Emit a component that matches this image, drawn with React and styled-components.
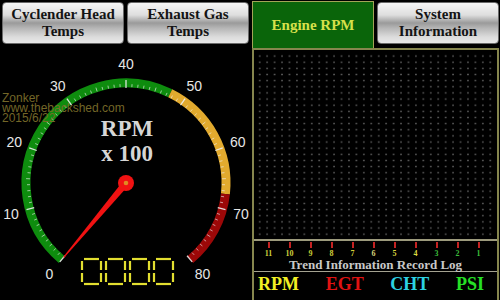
import React from 'react';
import styled, { createGlobalStyle, css } from 'styled-components';

const GlobalStyle = createGlobalStyle`
  html, body { margin: 0; padding: 0; background: #000; }
  body { width: 500px; height: 300px; overflow: hidden; }
`;

// gauge geometry (page coordinates)
const CX = 126;
const CY = 183;
const DEG = 3.5; // degrees per 1 unit (x100 rpm)

const pt = (v, r) => {
  const a = ((v - 40) * DEG * Math.PI) / 180;
  return [CX + r * Math.sin(a), CY - r * Math.cos(a)];
};

const arc = (v1, v2, r) => {
  const [x1, y1] = pt(v1, r);
  const [x2, y2] = pt(v2, r);
  const large = (v2 - v1) * DEG > 180 ? 1 : 0;
  return `M ${x1} ${y1} A ${r} ${r} 0 ${large} 1 ${x2} ${y2}`;
};

const tabs = [
  { label: ['Cyclender Head', 'Temps'] },
  { label: ['Exhaust Gas', 'Temps'] },
  { label: ['Engine RPM'], active: true },
  { label: ['System', 'Information'] },
];

const trend = [
  { n: 11, c: '#cfcf3a' }, { n: 10, c: '#cfcf3a' }, { n: 9, c: '#c4cc34' },
  { n: 8, c: '#d4d03a' }, { n: 7, c: '#d4d03a' }, { n: 6, c: '#d6d27a' },
  { n: 5, c: '#dcdc40' }, { n: 4, c: '#dcdc40' }, { n: 3, c: '#3cbc3c' },
  { n: 2, c: '#3cbc3c' }, { n: 1, c: '#3cc03c' },
];

const legend = [
  { t: 'RPM', c: '#f2f024' },
  { t: 'EGT', c: '#e01212' },
  { t: 'CHT', c: '#2cd2e2' },
  { t: 'PSI', c: '#26e026' },
];

const Screen = styled.div`
  width: 500px;
  height: 300px;
  background: #000;
  display: flex;
  flex-direction: column;
  overflow: hidden;
`;

const TabBar = styled.div`
  display: flex;
  gap: 3px;
  height: 48px;
  padding: 0 1px 0 2px;
  box-sizing: border-box;
  align-items: flex-start;
`;

const Tab = styled.div`
  flex: 1;
  box-sizing: border-box;
  display: flex;
  flex-direction: column;
  align-items: center;
  justify-content: center;
  text-align: center;
  font-family: "Liberation Serif", "Times New Roman", serif;
  font-weight: bold;
  font-size: 15px;
  line-height: 17px;
  ${(p) =>
    p.$active
      ? css`
          margin-top: 1px;
          height: 47px;
          background: #0a650a;
          border: 1px solid #a2a456;
          border-bottom: none;
          color: #d6e04a;
        `
      : css`
          margin-top: 2px;
          height: 42px;
          border-radius: 4px;
          border: 1px solid #6a6a6a;
          color: #141414;
          background: linear-gradient(
            to bottom,
            #f6f6f6 0%,
            #dedede 30%,
            #9a9a9a 50%,
            #b4b4b4 62%,
            #dcdcdc 85%,
            #e8e8e8 100%
          );
        `}
`;

const Body = styled.div`
  display: flex;
  height: 252px;
`;

const GaugeCol = styled.div`
  position: relative;
  width: 252px;
  height: 252px;
`;

const Watermark = styled.div`
  position: absolute;
  left: 2px;
  top: 45px;
  font-family: "Liberation Sans", Arial, sans-serif;
  font-size: 12px;
  line-height: 10px;
  color: #7a6c2a;
  opacity: 0.95;
  pointer-events: none;
`;

const Panel = styled.div`
  width: 247px;
  height: 252px;
  box-sizing: border-box;
  border: 2px solid #86864e;
  border-bottom: none;
  display: flex;
  flex-direction: column;
`;

const Plot = styled.div`
  height: 189px;
  box-sizing: border-box;
  padding: 3px 2px 2px 2px;
  background-color: #000;
  background-image: radial-gradient(circle, #565656 0.7px, transparent 1.1px);
  background-size: 7.45px 6.15px;
  background-clip: content-box;
  background-origin: content-box;
`;

const TickRow = styled.div`
  height: 20px;
  box-sizing: border-box;
  border-top: 2px solid #9c9a7c;
  padding: 0 7px 0 4px;
  display: flex;
`;

const TickCell = styled.div`
  width: 21px;
  display: flex;
  flex-direction: column;
  align-items: center;
`;

const TickMark = styled.div`
  width: 2px;
  height: 6px;
  margin-top: 1px;
  background: #c42222;
`;

const TickNum = styled.div`
  margin-top: 2px;
  font-family: "Liberation Serif", "Times New Roman", serif;
  font-weight: bold;
  font-size: 8px;
  line-height: 8px;
  color: ${(p) => p.$color};
`;

const Title = styled.div`
  height: 13px;
  box-sizing: border-box;
  border-bottom: 1px solid #a4a290;
  text-align: center;
  font-family: "Liberation Serif", "Times New Roman", serif;
  font-weight: bold;
  font-size: 13px;
  line-height: 12px;
  color: #c8c8c8;
`;

const Legend = styled.div`
  margin-top: 2px;
  padding: 0 13px 0 4px;
  display: flex;
  justify-content: space-between;
  font-family: "Liberation Serif", "Times New Roman", serif;
  font-weight: bold;
  font-size: 18px;
  line-height: 20px;
`;

const LegendItem = styled.span`
  color: ${(p) => p.$color};
`;

function SevenZero({ x, y }) {
  const w = 19;
  const h = 25;
  const m = h / 2;
  const segs = [
    [x + 2, y, x + w - 2, y],
    [x + 2, y + h, x + w - 2, y + h],
    [x, y + 2, x, y + m - 1.5],
    [x, y + m + 1.5, x, y + h - 2],
    [x + w, y + 2, x + w, y + m - 1.5],
    [x + w, y + m + 1.5, x + w, y + h - 2],
  ];
  return segs.map(([x1, y1, x2, y2], i) => (
    <line key={i} x1={x1} y1={y1} x2={x2} y2={y2} stroke="#e2de30" strokeWidth="2.2" />
  ));
}

function Gauge() {
  const ticks = [];
  for (let v = 0; v <= 80; v++) {
    const major = v % 10 === 0;
    const mid = v % 5 === 0;
    const [x1, y1] = pt(v, major ? 95 : 96);
    const [x2, y2] = pt(v, major ? 103 : mid ? 100 : 99);
    ticks.push(
      <line
        key={v}
        x1={x1}
        y1={y1}
        x2={x2}
        y2={y2}
        stroke="#f0f0f0"
        strokeOpacity={major ? 0.9 : 0.7}
        strokeWidth={major ? 1.3 : 0.9}
      />
    );
  }
  const labels = [0, 10, 20, 30, 40, 50, 60, 70, 80].map((v) => {
    const [x, y] = pt(v / 1, 119);
    return (
      <text
        key={v}
        x={x}
        y={y}
        textAnchor="middle"
        dominantBaseline="central"
        fontFamily="'Liberation Sans', Arial, sans-serif"
        fontSize="14"
        fill="#e6e6e6"
      >
        {v}
      </text>
    );
  });
  return (
    <svg width="252" height="252" viewBox="0 48 252 252" style={{ display: 'block' }}>
      <path d={arc(0, 47.5, 100)} stroke="#0e8c0e" strokeWidth="9" fill="none" />
      <path d={arc(47.5, 67.5, 100)} stroke="#e2aa2e" strokeWidth="9" fill="none" />
      <path d={arc(67.5, 80, 100)} stroke="#9c0808" strokeWidth="9" fill="none" />
      {ticks}
      {labels}
      <text
        x={CX + 1}
        y="136"
        textAnchor="middle"
        fontFamily="'Liberation Serif', 'Times New Roman', serif"
        fontWeight="bold"
        fontSize="23"
        fill="#d6d6d6"
      >
        RPM
      </text>
      <text
        x={CX + 1}
        y="161"
        textAnchor="middle"
        fontFamily="'Liberation Serif', 'Times New Roman', serif"
        fontWeight="bold"
        fontSize="23"
        fill="#d6d6d6"
      >
        x 100
      </text>
      <g transform={`translate(${CX} ${CY}) rotate(-140)`}>
        <polygon points="-3.5,0 3.5,0 0.6,-97 -0.6,-97" fill="#f01212" />
      </g>
      <circle cx={CX} cy={CY} r="8" fill="#f01212" />
      <circle cx={CX} cy={CY} r="2.3" fill="#e08a22" />
      {[0, 1, 2, 3].map((i) => (
        <SevenZero key={i} x={82 + i * 24} y={259} />
      ))}
    </svg>
  );
}

export default function App() {
  return (
    <>
      <GlobalStyle />
      <Screen>
        <TabBar>
          {tabs.map((t, i) => (
            <Tab key={i} $active={t.active}>
              {t.label.map((l) => (
                <span key={l}>{l}</span>
              ))}
            </Tab>
          ))}
        </TabBar>
        <Body>
          <GaugeCol>
            <Gauge />
            <Watermark>
              Zonker
              <br />
              www.thebackshed.com
              <br />
              2015/6/22
            </Watermark>
          </GaugeCol>
          <Panel>
            <Plot />
            <TickRow>
              {trend.map((t) => (
                <TickCell key={t.n}>
                  <TickMark />
                  <TickNum $color={t.c}>{t.n}</TickNum>
                </TickCell>
              ))}
            </TickRow>
            <Title>Trend Information Record Log</Title>
            <Legend>
              {legend.map((l) => (
                <LegendItem key={l.t} $color={l.c}>
                  {l.t}
                </LegendItem>
              ))}
            </Legend>
          </Panel>
        </Body>
      </Screen>
    </>
  );
}
